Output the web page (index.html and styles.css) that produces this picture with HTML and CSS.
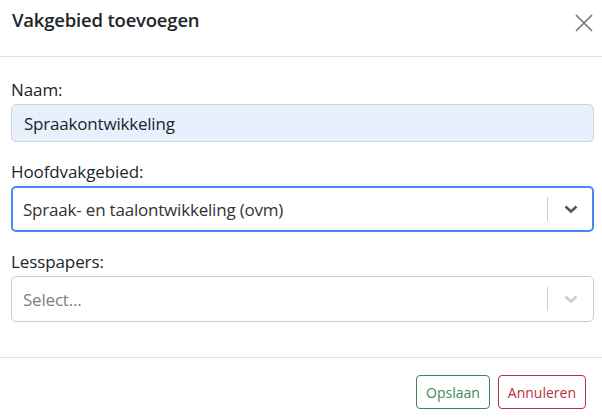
FILE: index.html
```html
<!DOCTYPE html>
<html lang="nl">
<head>
    <meta charset="UTF-8">
    <meta name="viewport" content="width=device-width, initial-scale=1.0">
    <title>Vakgebied toevoegen</title>
    <link rel="stylesheet" href="styles.css">
</head>
<body>
    <div class="modal">
        <div class="modal-header">
            <h5 class="modal-title">Vakgebied toevoegen</h5>
            <button class="btn-close" aria-label="Sluiten">
                <svg width="18" height="18" viewBox="0 0 18 18">
                    <path d="M1 1 L17 17 M17 1 L1 17" stroke="#777" stroke-width="1.7" fill="none"/>
                </svg>
            </button>
        </div>

        <div class="modal-body">
            <div class="form-group">
                <label class="form-label">Naam:</label>
                <div class="form-control autofill">Spraakontwikkeling</div>
            </div>

            <div class="form-group">
                <label class="form-label">Hoofdvakgebied:</label>
                <div class="select-control focused">
                    <div class="select-value">Spraak- en taalontwikkeling (ovm)</div>
                    <span class="select-separator"></span>
                    <span class="select-indicator">
                        <svg width="20" height="20" viewBox="0 0 20 20">
                            <path d="M4.5 7.5 L10 12.5 L15.5 7.5" stroke="currentColor" stroke-width="2.6" fill="none"/>
                        </svg>
                    </span>
                </div>
            </div>

            <div class="form-group last">
                <label class="form-label">Lesspapers:</label>
                <div class="select-control">
                    <div class="select-value placeholder">Select...</div>
                    <span class="select-separator"></span>
                    <span class="select-indicator">
                        <svg width="20" height="20" viewBox="0 0 20 20">
                            <path d="M4.5 7.5 L10 12.5 L15.5 7.5" stroke="currentColor" stroke-width="2.6" fill="none"/>
                        </svg>
                    </span>
                </div>
            </div>
        </div>

        <div class="modal-footer">
            <button class="btn btn-outline-success">Opslaan</button>
            <button class="btn btn-outline-danger">Annuleren</button>
        </div>
    </div>
</body>
</html>
```

FILE: styles.css
```css
* {
    box-sizing: border-box;
}
body {
    margin: 0;
    background-color: #fff;
    font-family: 'Open Sans', 'Noto Sans', sans-serif;
    color: #212529;
}
.modal {
    width: 602px;
    height: 418px;
}
.modal-header {
    height: 57px;
    display: flex;
    align-items: flex-start;
    justify-content: space-between;
    padding: 6px 3px 0 12px;
    border-bottom: 1px solid #dee2e6;
}
.modal-title {
    margin: 0;
    font-size: 18.5px;
    font-weight: 600;
    line-height: 28px;
    letter-spacing: -0.2px;
}
.btn-close {
    background: none;
    border: none;
    padding: 8px 6px;
    margin: 0;
    cursor: pointer;
}
.modal-body {
    padding: 21px 8px 35px 11px;
}
.form-group {
    margin-bottom: 18px;
}
.form-group.last {
    margin-bottom: 0;
}
.form-label {
    display: block;
    margin-bottom: 2px;
    font-size: 17px;
    font-weight: 500;
    line-height: 24px;
    letter-spacing: -0.1px;
}
.form-control {
    height: 38px;
    padding: 0 12px;
    display: flex;
    align-items: center;
    font-size: 17px;
    letter-spacing: -0.2px;
    border: 1px solid #ced4da;
    border-radius: 5px;
}
.form-control.autofill {
    background-color: #e8f0fe;
}
.select-control {
    height: 46px;
    display: flex;
    align-items: center;
    border: 1px solid #ccc;
    border-radius: 5px;
    background-color: #fff;
}
.select-control.focused {
    border: 2px solid #4a86f7;
}
.select-value {
    flex: 1;
    padding: 0 11px;
    font-size: 17px;
    letter-spacing: -0.2px;
    color: #333;
}
.select-control.focused .select-value {
    padding-left: 10px;
}
.select-value.placeholder {
    color: #808080;
}
.select-separator {
    width: 1px;
    height: 24px;
    background-color: #ccc;
}
.select-indicator {
    display: flex;
    padding: 0 12px 0 13px;
    color: #ccc;
}
.select-control.focused .select-indicator {
    color: #555;
    padding-right: 11px;
}
.modal-footer {
    border-top: 1px solid #dee2e6;
    display: flex;
    justify-content: flex-end;
    gap: 8px;
    padding: 17px 16px 0 0;
}
.btn {
    height: 34px;
    padding: 0 9px;
    font-family: inherit;
    font-size: 14px;
    background: #fff;
    border-radius: 4px;
    cursor: pointer;
}
.btn-outline-success {
    color: #3a8a58;
    border: 1px solid #3a8a58;
}
.btn-outline-danger {
    color: #b7303c;
    border: 1px solid #b7303c;
}
```
